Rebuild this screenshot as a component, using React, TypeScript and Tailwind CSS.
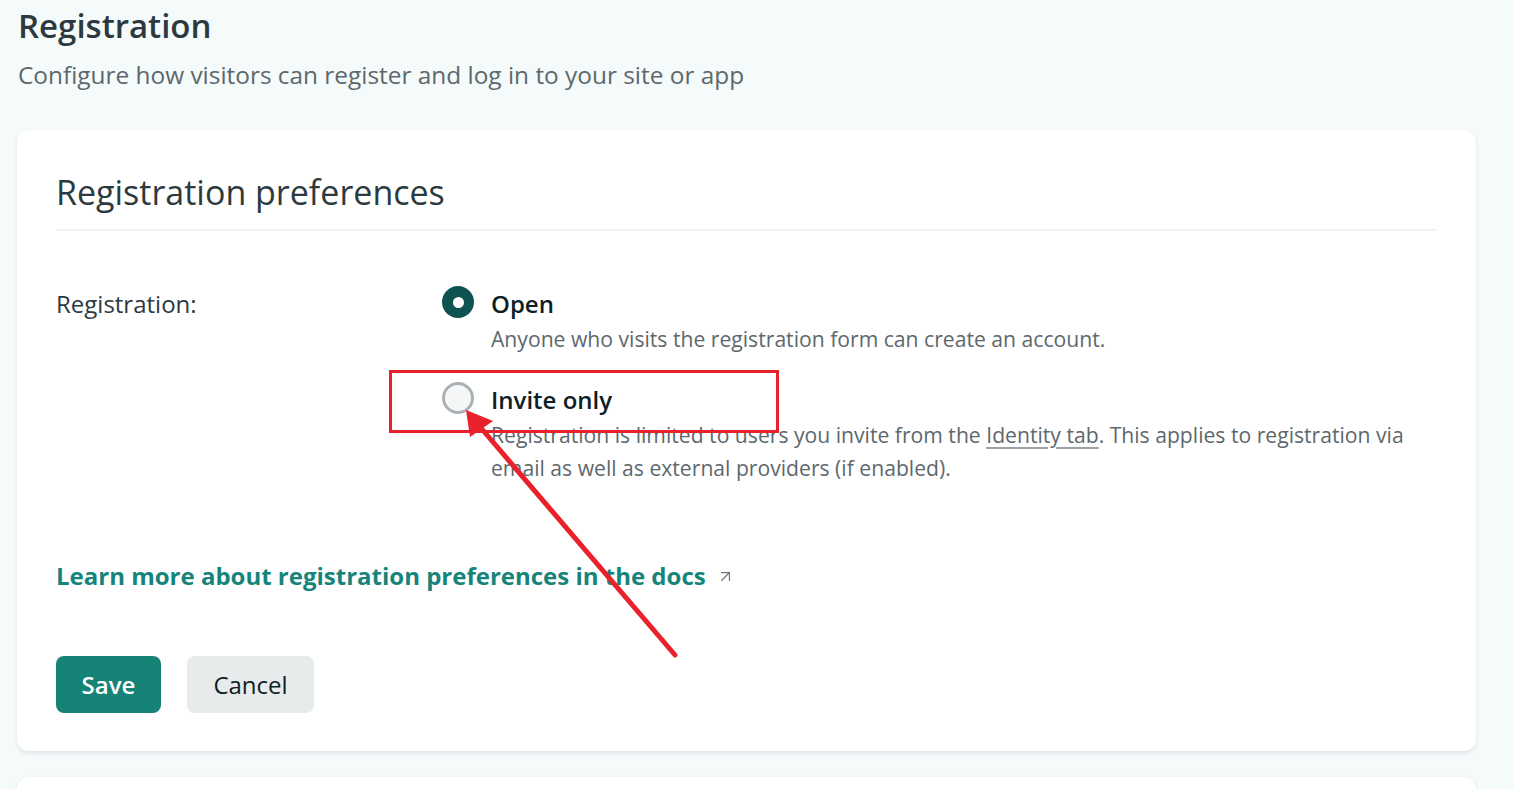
import { ArrowUpRight } from "lucide-react";

type Option = {
  id: string;
  label: string;
  checked: boolean;
  description: React.ReactNode;
};

const options: Option[] = [
  {
    id: "open",
    label: "Open",
    checked: true,
    description: "Anyone who visits the registration form can create an account.",
  },
  {
    id: "invite",
    label: "Invite only",
    checked: false,
    description: (
      <>
        Registration is limited to users you invite from the{" "}
        <a className="underline decoration-[#9aa2a6] underline-offset-4">Identity tab</a>. This
        applies to registration via email as well as external providers (if enabled).
      </>
    ),
  },
];

function Radio({ checked }: { checked: boolean }) {
  if (checked) {
    return (
      <span className="flex h-[32px] w-[32px] shrink-0 items-center justify-center rounded-full bg-[#0e5350]">
        <span className="h-[11px] w-[11px] rounded-full bg-white" />
      </span>
    );
  }
  return <span className="block h-[32px] w-[32px] shrink-0 rounded-full border-[3px] border-[#aab1b4] bg-[#f4f6f7]" />;
}

export default function App() {
  return (
    <div
      className="relative min-h-[789px] overflow-hidden bg-[#f5fafa] px-[17px] text-[#2e3a40]"
      style={{ fontFamily: '"Open Sans", "Noto Sans", sans-serif' }}
    >
      <h1 className="pt-[4px] pl-[1px] text-[33px] font-semibold leading-[44px] text-[#2c3a40]">Registration</h1>
      <p className="mt-[11px] pl-[1px] text-[24.4px] leading-[32px] text-[#5d686d]">
        Configure how visitors can register and log in to your site or app
      </p>

      <div className="mt-[39px] w-[1459px] rounded-[12px] bg-white px-[39px] pt-[40px] pb-[38px] shadow-[0_2px_4px_rgba(14,30,37,0.10)]">
        <h2 className="text-[34px] font-medium leading-[44px] text-[#2c3a40]">Registration preferences</h2>
        <div className="mt-[15px] h-[2px] bg-[#f1f3f3]" />

        <div className="mt-[55px] flex">
          <div className="w-[386px] shrink-0 text-[24px] leading-[36px] text-[#2c3a40]">Registration:</div>
          <div className="flex flex-col gap-[27px]">
            {options.map((o) => (
              <div key={o.id} className="flex gap-[17px]">
                <div className="shrink-0">
                  <Radio checked={o.checked} />
                </div>
                <div>
                  <div className="text-[24px] font-semibold leading-[36px] text-[#0e1e25]">{o.label}</div>
                  <p className="w-[935px] text-[21.15px] leading-[33px] text-[#5d686d]">{o.description}</p>
                </div>
              </div>
            ))}
          </div>
        </div>

        <a className="mt-[76px] flex items-center gap-[10px] text-[24px] font-bold leading-[32px] text-[#15847a]">
          Learn more about registration preferences in the docs
          <ArrowUpRight size={19} strokeWidth={1.5} className="text-[#6b7579]" />
        </a>

        <div className="mt-[64px] flex gap-[26px]">
          <button className="h-[57px] w-[105px] rounded-[8px] bg-[#168377] text-[24px] font-semibold text-white">
            Save
          </button>
          <button className="h-[57px] w-[127px] rounded-[8px] bg-[#e8ebec] text-[24px] text-[#0e1e25]">
            Cancel
          </button>
        </div>
      </div>

      <div className="mt-[26px] h-[40px] w-[1459px] rounded-[12px] bg-white shadow-[0_2px_4px_rgba(14,30,37,0.10)]" />

      {/* annotation overlay */}
      <div className="absolute left-[389px] top-[370px] h-[63px] w-[390px] border-[3px] border-[#e8212b]" />
      <svg className="pointer-events-none absolute left-0 top-0" width="1514" height="789">
        <line x1="481" y1="428" x2="675" y2="655" stroke="#e8212b" strokeWidth="5" strokeLinecap="round" />
        <polygon points="466,410 470,437 493,421" fill="#e8212b" />
      </svg>
    </div>
  );
}
